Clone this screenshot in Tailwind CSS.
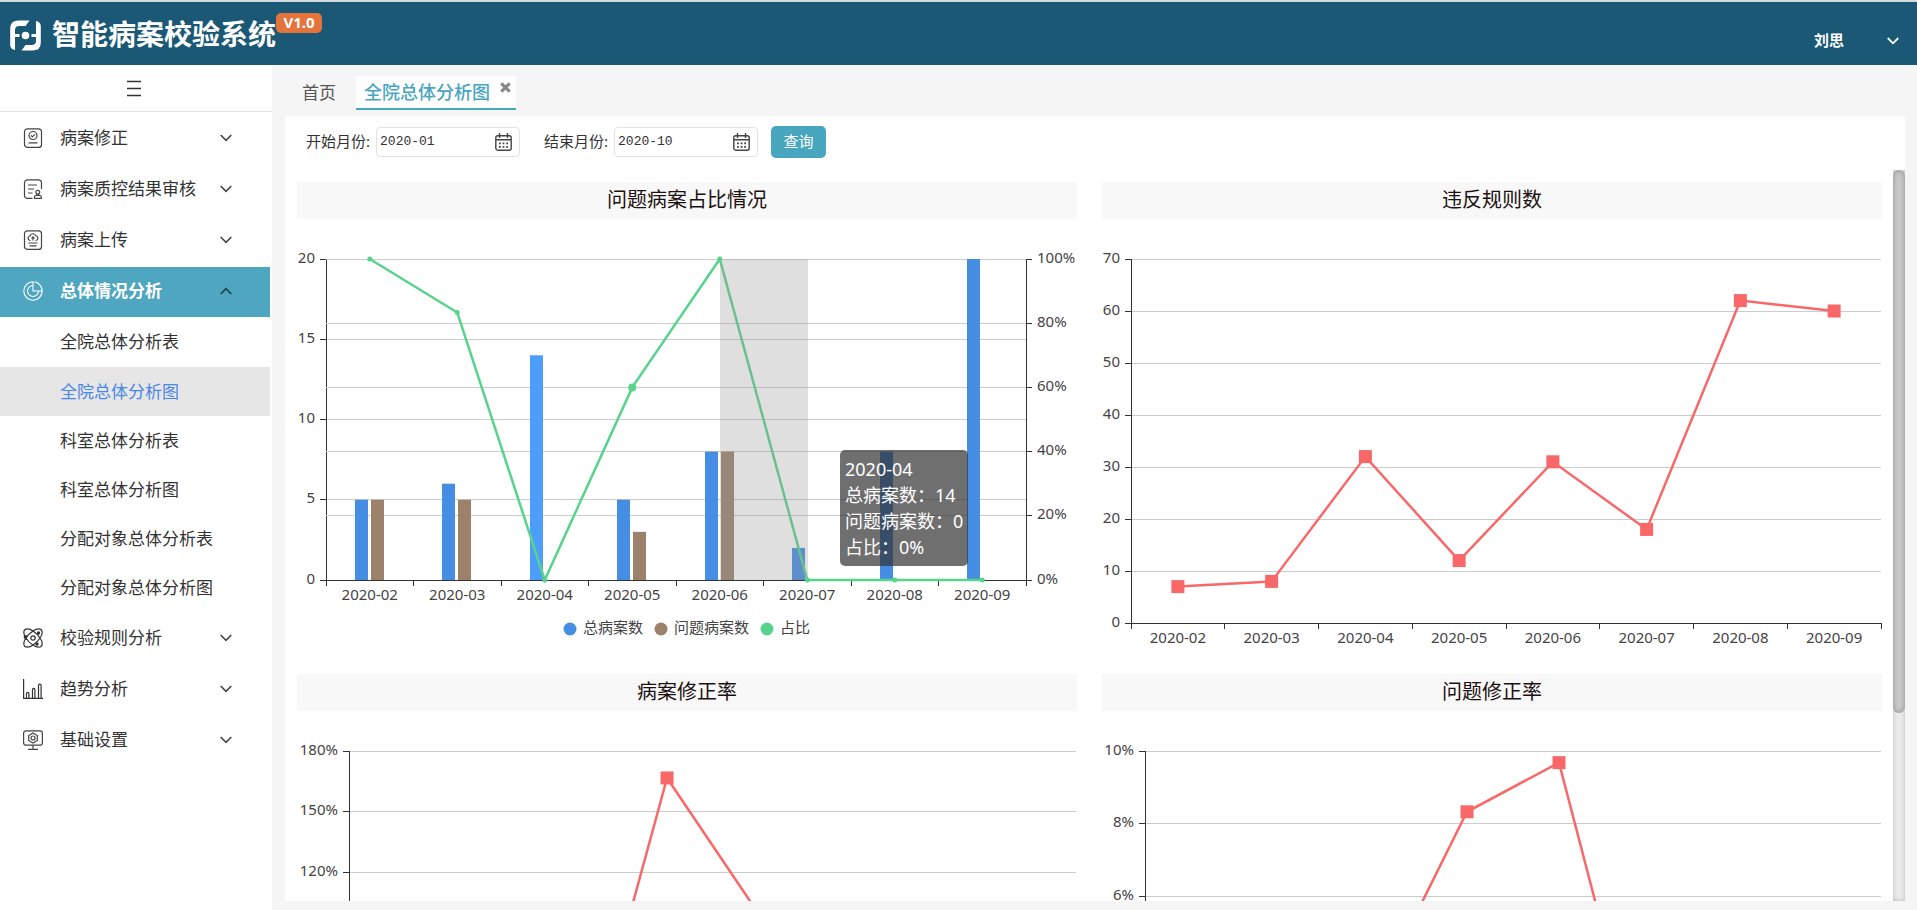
<!DOCTYPE html>
<html lang="zh-CN">
<head>
<meta charset="utf-8">
<meta name="viewport" content="width=device-width, initial-scale=1">
<title>智能病案校验系统</title>
<script src="https://cdn.jsdelivr.net/npm/@tailwindcss/browser@4"></script>
</head>
<body class="flex h-screen flex-col overflow-hidden border-t-2 border-[#d3dae2] bg-[#f5f5f5] font-['Noto_Sans','Noto_Sans_CJK_SC',sans-serif] text-[#333]">

<!-- Header -->
<header class="flex h-[63px] shrink-0 items-center bg-[#1a5876] pr-[18px] pl-[10px] text-white">
  <svg class="mt-1 size-[31px]" viewBox="0 0 31 31" fill="none" stroke="#fff" aria-hidden="true">
    <path d="M.2 25.500V8.500Q.2.500 8.500.500H19.500L15.500 6H9.500Q5 6 5 10V30Q1 29.500.2 25.500Z" fill="#fff" stroke="none"/>
    <path d="M30.800 5.500V22.500Q30.800 30.500 22.500 30.500H11.500L15.500 25H21.500Q26 25 26 21V1Q30 1.500 30.800 5.500Z" fill="#fff" stroke="none"/>
    <path d="M3 15.500H9.500M21.500 15.500H28" stroke-width="3"/>
    <circle cx="15.500" cy="15.500" r="3.800" fill="#fff" stroke="none"/>
  </svg>
  <h1 class="ml-[11px] text-[28px] leading-[40px] font-bold">智能病案校验系统</h1>
  <span class="mb-[22px] flex h-5 w-[46px] items-center justify-center rounded-[5px] bg-[#e5733c] text-[15px] font-bold">V1.0</span>
  <button type="button" class="mt-[14px] ml-auto flex items-center gap-[43px] text-[15px] font-bold">刘思
    <svg class="size-3" viewBox="0 0 12 12" fill="none" stroke="#fff" stroke-width="1.800"><path d="M.7 3 6 8.300 11.300 3"/></svg>
  </button>
</header>

<div class="flex min-h-0 flex-1">

  <!-- Sidebar -->
  <aside class="w-[272px] shrink-0 bg-white">
    <div class="flex h-[47px] items-center justify-center border-b border-[#e2e2e2] pr-1">
      <button type="button" aria-label="折叠菜单">
        <svg class="h-[18px] w-[14px]" viewBox="0 0 14 18" fill="none" stroke="#333"><path d="M0 2.500h14M0 9.500h14M0 16.500h14" stroke-width="1.300"/></svg>
      </button>
    </div>
    <nav class="flex w-[270px] flex-col gap-px pt-[2px] text-[17px]">
      <button type="button" class="flex h-[50px] items-center pr-[38px] pb-[2px] pl-[23px]">
        <svg class="size-5" viewBox="0 0 20 20" fill="none" stroke="#444" stroke-width="1.200"><rect x="1.500" y=".8" width="17" height="18.600" rx="3"/><circle cx="10" cy="7.500" r="4"/><path d="m8 7.500 1.500 1.300L12 6.300M5.500 14.800h9"/></svg>
        <span class="ml-[17px]">病案修正</span>
        <svg class="ml-auto size-3" viewBox="0 0 12 12" fill="none" stroke="#444" stroke-width="1.600"><path d="M.7 3 6 8.300 11.300 3"/></svg>
      </button>
      <button type="button" class="flex h-[50px] items-center pr-[38px] pb-[2px] pl-[23px]">
        <svg class="size-5" viewBox="0 0 20 20" fill="none" stroke="#444" stroke-width="1.200"><path d="M9.500 19.400h-5a3 3 0 0 1-3-3V3.800a3 3 0 0 1 3-3h11a3 3 0 0 1 3 3V10M5 6h9M5 10h6M5 14h4.500"/><circle cx="14.800" cy="13.300" r="1.900"/><path d="M14 15v1.500M15.600 15v1.500M11.500 19.300v-1.500q0-1.300 1.500-1.300h3.800q1.500 0 1.500 1.300v1.500z"/></svg>
        <span class="ml-[17px]">病案质控结果审核</span>
        <svg class="ml-auto size-3" viewBox="0 0 12 12" fill="none" stroke="#444" stroke-width="1.600"><path d="M.7 3 6 8.300 11.300 3"/></svg>
      </button>
      <button type="button" class="flex h-[50px] items-center pr-[38px] pb-[2px] pl-[23px]">
        <svg class="size-5" viewBox="0 0 20 20" fill="none" stroke="#444" stroke-width="1.200"><rect x="1.500" y=".8" width="17" height="18.600" rx="3"/><path d="M7.500 10.500H7a2.300 2.300 0 0 1-.2-4.500 3.400 3.400 0 0 1 6.400 0 2.300 2.300 0 0 1-.2 4.500h-.500M10 10.500V7M8.500 8.300 10 6.800l1.500 1.500M5.500 13h9M6.500 15.800h7"/></svg>
        <span class="ml-[17px]">病案上传</span>
        <svg class="ml-auto size-3" viewBox="0 0 12 12" fill="none" stroke="#444" stroke-width="1.600"><path d="M.7 3 6 8.300 11.300 3"/></svg>
      </button>
      <div>
        <button type="button" aria-expanded="true" class="flex h-[50px] w-full items-center bg-[#4fa6c0] pr-[38px] pb-[2px] pl-[23px] font-bold text-white">
          <svg class="size-5" viewBox="0 0 20 20" fill="none" stroke="#fff" stroke-width="1.100"><path d="M10 .8a9.200 9.200 0 1 0 9.200 9.200H10zM10 4.500A5.500 5.500 0 1 0 15.500 10M11.500.9A9.200 9.200 0 0 1 19.200 10"/></svg>
          <span class="ml-[17px]">总体情况分析</span>
          <svg class="ml-auto size-3" viewBox="0 0 12 12" fill="none" stroke="#1e3f49" stroke-width="1.600"><path d="M.7 9 6 3.700 11.300 9"/></svg>
        </button>
        <div class="flex flex-col">
          <a href="#" class="flex h-[50px] items-center pl-[60px]">全院总体分析表</a>
          <a href="#" class="flex h-[49px] items-center bg-[#e6e6e6] pl-[60px] text-[#4a86e8]">全院总体分析图</a>
          <a href="#" class="flex h-[49px] items-center pl-[60px]">科室总体分析表</a>
          <a href="#" class="flex h-[49px] items-center pl-[60px]">科室总体分析图</a>
          <a href="#" class="flex h-[49px] items-center pl-[60px]">分配对象总体分析表</a>
          <a href="#" class="flex h-[49px] items-center pl-[60px]">分配对象总体分析图</a>
        </div>
      </div>
      <button type="button" class="flex h-[50px] items-center pr-[38px] pl-[23px]">
        <svg class="size-5" viewBox="0 0 20 20" fill="none" stroke="#333" stroke-width="1.200"><path d="M4.500.800Q7 .8 10 3Q13 .8 15.500.8Q19.200.8 19.200 4.500Q19.200 7 17 10Q19.200 13 19.200 15.500Q19.200 19.200 15.500 19.200Q13 19.200 10 17Q7 19.200 4.500 19.200Q.8 19.200.8 15.500Q.8 13 3 10Q.8 7 .8 4.500Q.8.8 4.500.8ZM10 3Q5.500 6 3 10Q5.500 14.500 10 17M10 3Q14.500 6 17 10Q14.500 14 10 17"/><circle cx="10" cy="10" r="2.200"/><g fill="#333" stroke="none"><circle cx="2.500" cy="9" r="1.900"/><circle cx="15.500" cy="5" r="1.700"/><circle cx="14" cy="16" r="1.700"/></g></svg>
        <span class="ml-[17px]">校验规则分析</span>
        <svg class="ml-auto size-3" viewBox="0 0 12 12" fill="none" stroke="#444" stroke-width="1.600"><path d="M.7 3 6 8.300 11.300 3"/></svg>
      </button>
      <button type="button" class="flex h-[50px] items-center pr-[38px] pl-[23px]">
        <svg class="size-5" viewBox="0 0 20 20" fill="none" stroke="#333" stroke-width="1.200"><path d="M.6 0v19.400H20M3.500 19v-4.500a1.200 1.200 0 0 1 2.400 0V19M9.500 19v-8.500a1.200 1.200 0 0 1 2.400 0V19M15.500 19V6.500a1.300 1.300 0 0 1 2.600 0V19"/></svg>
        <span class="ml-[17px]">趋势分析</span>
        <svg class="ml-auto size-3" viewBox="0 0 12 12" fill="none" stroke="#444" stroke-width="1.600"><path d="M.7 3 6 8.300 11.300 3"/></svg>
      </button>
      <button type="button" class="flex h-[50px] items-center pr-[38px] pl-[23px]">
        <svg class="size-5" viewBox="0 0 20 20" fill="none" stroke="#444" stroke-width="1.200"><rect x=".6" y=".8" width="18.800" height="14.400" rx="2.500"/><path d="M10 15v4M5 19.300h10M10 3l4.300 2.500v5L10 13l-4.300-2.500v-5z"/><circle cx="10" cy="8" r="2"/></svg>
        <span class="ml-[17px]">基础设置</span>
        <svg class="ml-auto size-3" viewBox="0 0 12 12" fill="none" stroke="#444" stroke-width="1.600"><path d="M.7 3 6 8.300 11.300 3"/></svg>
      </button>
    </nav>
  </aside>

  <main class="flex min-w-0 flex-1 flex-col pr-3 pb-[9px] pl-[13px]">
    <!-- Tabs -->
    <div class="flex h-[51px] shrink-0 items-center gap-5 pt-[5px] pl-[17px] text-[17px]">
      <a href="#" class="text-[#555]">首页</a>
      <div class="flex h-[34px] w-[160px] items-start gap-[10px] border-b-2 border-[#48a6bf] bg-white pl-2">
        <a href="#" class="text-[18px] leading-[32px] font-medium whitespace-nowrap text-[#48a6bf]">全院总体分析图</a>
        <button type="button" aria-label="关闭" class="pt-[6px]">
          <svg class="size-[11px]" viewBox="0 0 11 11" stroke="#888" stroke-width="3.200"><path d="m1.300 1.300 8.400 8.400M9.700 1.300 1.300 9.700"/></svg>
        </button>
      </div>
    </div>

    <section class="flex min-h-0 flex-1 flex-col bg-white">
      <!-- Filter -->
      <form class="flex h-[54px] shrink-0 items-center pb-[3px] pl-[21px] text-[15px]">
        <label for="start">开始月份:</label>
        <div class="relative ml-[6px]">
          <input id="start" type="text" value="2020-01" class="block h-[30px] w-[144px] rounded-[4px] border border-[#e2e2e2] bg-white pl-[3px] font-['Liberation_Mono',monospace] text-[13px]">
          <svg class="absolute top-[6px] right-2 h-[18px] w-[17px]" viewBox="0 0 17 18" fill="none" stroke="#444" stroke-width="1.400"><rect x=".8" y="2.800" width="15.400" height="14.400" rx="2"/><path d="M1 6.800h15M4.500 0v5M12.500 0v5"/><path d="M4 10.300h9.500M4 13.800h9.500" stroke-width="1.800" stroke-dasharray="1.800 1.800"/></svg>
        </div>
        <label for="end" class="ml-6">结束月份:</label>
        <div class="relative ml-[6px]">
          <input id="end" type="text" value="2020-10" class="block h-[30px] w-[144px] rounded-[4px] border border-[#e2e2e2] bg-white pl-[3px] font-['Liberation_Mono',monospace] text-[13px]">
          <svg class="absolute top-[6px] right-2 h-[18px] w-[17px]" viewBox="0 0 17 18" fill="none" stroke="#444" stroke-width="1.400"><rect x=".8" y="2.800" width="15.400" height="14.400" rx="2"/><path d="M1 6.800h15M4.500 0v5M12.500 0v5"/><path d="M4 10.300h9.500M4 13.800h9.500" stroke-width="1.800" stroke-dasharray="1.800 1.800"/></svg>
        </div>
        <button type="button" class="ml-[13px] h-8 w-[55px] rounded-[5px] bg-[#48a6bf] text-[15px] text-white">查询</button>
      </form>

      <!-- Charts -->
      <div class="flex min-h-0 flex-1">
        <div class="grid min-w-0 flex-1 grid-cols-2 content-start gap-x-[25px] overflow-y-auto pt-3 pr-[11px] pl-3 [scrollbar-width:none]">
          <article class="relative">
            <h2 class="h-[37px] bg-[#f8f8f8] text-center text-[20px] leading-[36px] text-[#1c1010]">问题病案占比情况</h2>
            <svg id="ratio" class="w-full" viewBox="0 0 780 455"></svg>
            <div class="absolute top-[268px] left-[543px] rounded-[5px] bg-[#323232]/70 px-[5px] py-[6px] text-[18px] leading-[26px] whitespace-nowrap text-white">
              <p>2020-04</p><p>总病案数：14</p><p>问题病案数：0</p><p>占比：0%</p>
            </div>
          </article>
          <article>
            <h2 class="h-[37px] bg-[#f8f8f8] text-center text-[20px] leading-[36px] text-[#1c1010]">违反规则数</h2>
            <svg id="rules" class="w-full" viewBox="0 0 780 455"></svg>
          </article>
          <article>
            <h2 class="h-[37px] bg-[#f8f8f8] text-center text-[20px] leading-[36px] text-[#1c1010]">病案修正率</h2>
            <svg id="caseFix" class="w-full" viewBox="0 0 780 455"></svg>
          </article>
          <article>
            <h2 class="h-[37px] bg-[#f8f8f8] text-center text-[20px] leading-[36px] text-[#1c1010]">问题修正率</h2>
            <svg id="issueFix" class="w-full" viewBox="0 0 780 455"></svg>
          </article>
        </div>
        <div class="w-3 shrink-0 bg-[#ebebeb] shadow-[inset_0_0_5px_rgba(0,0,0,0.2)]">
          <div class="h-[543px] rounded-[6px] bg-[#c8c8c8] shadow-[inset_0_0_5px_rgba(0,0,0,0.3)]"></div>
        </div>
      </div>
    </section>
  </main>
</div>

<script>
const months = ['2020-02', '2020-03', '2020-04', '2020-05', '2020-06', '2020-07', '2020-08', '2020-09'];
const snap = v => Math.floor(v) + 0.5;
const line = (x1, y1, x2, y2, color) =>
  `<line x1="${x1}" y1="${y1}" x2="${x2}" y2="${y2}" stroke="${color}" shape-rendering="crispEdges"/>`;
const text = (x, y, s, anchor) =>
  `<text x="${x}" y="${y}" text-anchor="${anchor}" font-size="15" fill="#444">${s}</text>`;
const center = (c, i) => c.left + (c.right - c.left) / 8 * (i + 0.5);
const yOf = (c, v, max) => c.bottom - (c.bottom - c.top) * v / max;

function monthAxis(c) {
  let s = line(c.left, snap(c.bottom), c.right, snap(c.bottom), '#333');
  for (let i = 0; i <= 8; i++) {
    const x = snap(c.left + (c.right - c.left) / 8 * i);
    s += line(x, c.bottom, x, c.bottom + 6, '#333');
  }
  months.forEach((m, i) => s += text(center(c, i), c.bottom + 20, m, 'middle'));
  return s;
}

function valueAxis(c, max, step, unit, onRight) {
  const x = onRight ? c.right : c.left, dir = onRight ? 1 : -1;
  let s = '';
  for (let v = 0; v <= max; v += step) {
    const y = snap(yOf(c, v, max));
    if (v) s += line(c.left, y, c.right, y, '#ccc');
    s += line(x, y, x + 6 * dir, y, '#333');
    s += text(x + 11 * dir, y + 3, v + unit, onRight ? 'start' : 'end');
  }
  return s + line(snap(x), c.top, snap(x), c.bottom, '#333');
}

function squareLine(id, c, max, step, unit, data) {
  const pts = data.map((v, i) => [center(c, i), yOf(c, v, max)]);
  document.getElementById(id).innerHTML = valueAxis(c, max, step, unit) + monthAxis(c) +
    `<polyline points="${pts.join(' ')}" fill="none" stroke="#f96868" stroke-width="2.500"/>` +
    pts.map(([x, y]) => `<rect x="${x - 6.5}" y="${y - 6.5}" width="13" height="13" fill="#f96868"/>`).join('');
}

function ratioChart() {
  const c = { left: 29, right: 729, top: 40, bottom: 361 };
  const total = [5, 6, 14, 5, 8, 2, 8, 20], issue = [5, 5, 0, 3, 8, 0, 0, 0];
  const share = [100, 83.33, 0, 60, 100, 0, 0, 0];
  let s = valueAxis(c, 20, 5, '') + valueAxis(c, 100, 20, '%', true) + monthAxis(c);
  months.forEach((m, i) => {
    const x = Math.round(center(c, i)), a = yOf(c, total[i], 20), b = yOf(c, issue[i], 20);
    s += `<rect x="${x - 15}" y="${a}" width="13" height="${c.bottom - a}" fill="${i === 2 ? '#4d9dfb' : '#468ee3'}"/>`;
    s += `<rect x="${x + 1}" y="${b}" width="13" height="${c.bottom - b}" fill="#9c826b"/>`;
  });
  const pts = share.map((v, i) => [center(c, i), yOf(c, v, 100)]);
  s += `<polyline points="${pts.join(' ')}" fill="none" stroke="#58d38c" stroke-width="2.500"/>`;
  s += `<rect x="${Math.ceil(pts[4][0])}" y="${c.top}" width="88" height="${c.bottom - c.top}" fill="#969696" fill-opacity=".3"/>`;
  pts.forEach(([x, y], i) => s += `<circle cx="${x}" cy="${y}" r="${i === 3 ? 4 : 2.5}" fill="#58d38c"/>`);
  [['总病案数', 273, '#468ee3'], ['问题病案数', 364, '#9c826b'], ['占比', 470, '#58d38c']].forEach(([name, x, color]) =>
    s += `<circle cx="${x}" cy="410" r="6.500" fill="${color}"/>` + text(x + 13, 414, name, 'start'));
  document.getElementById('ratio').innerHTML = s;
}

ratioChart();
squareLine('rules', { left: 29, right: 779, top: 40, bottom: 404 }, 70, 10, '', [7, 8, 32, 12, 31, 18, 62, 60]);
squareLine('caseFix', { left: 52, right: 779, top: 40, bottom: 404 }, 180, 30, '%', [0, 0, 2, 166.67, 100, 0, 0, 0]);
squareLine('issueFix', { left: 43, right: 779, top: 40, bottom: 404 }, 10, 2, '%', [0, 0, 3.25, 8.33, 9.68, 0, 0, 0]);
</script>
</body>
</html>
